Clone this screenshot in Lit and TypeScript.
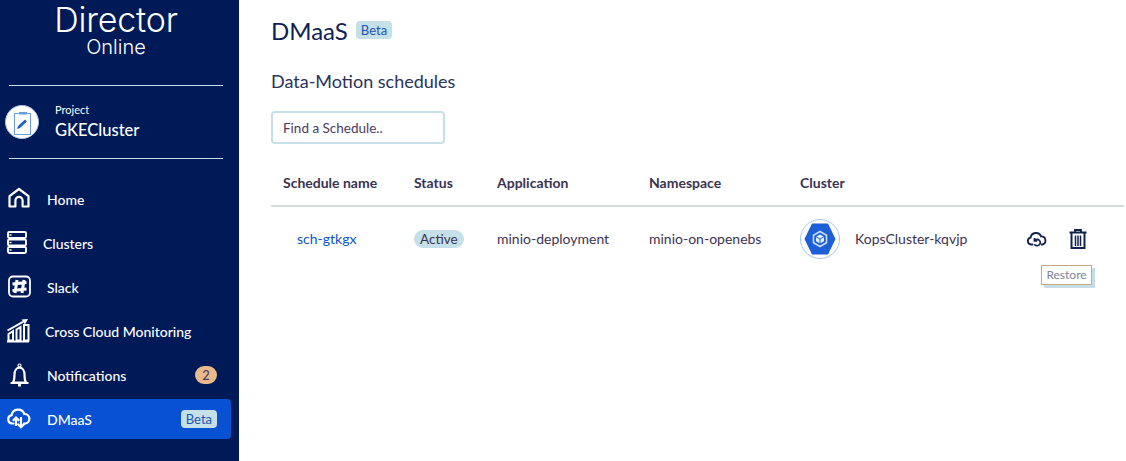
import { LitElement, html, css, svg } from 'lit';
import { customElement } from 'lit/decorators.js';

const navIcons: Record<string, unknown> = {
  home: svg`<path d="M2.500 19.500V9.200L12 2l9.500 7.200v10.300h-5.900v-6a3.600 3.600 0 0 0-7.200 0v6z" fill="none" stroke="#fff" stroke-width="2.200" stroke-linejoin="round"/>`,
  clusters: svg`<rect x="1" y="1" width="18" height="6" rx="1.200" fill="none" stroke="#fff" stroke-width="1.900"/><rect x="1" y="8.500" width="18" height="6" rx="1.200" fill="none" stroke="#fff" stroke-width="1.900"/><rect x="1" y="16" width="18" height="6" rx="1.200" fill="none" stroke="#fff" stroke-width="1.900"/><path d="M2.500 4h2M2.500 11.500h2M2.500 19h2" stroke="#fff" stroke-width="1.500"/>`,
  slack: svg`<rect x="2" y="1.500" width="21" height="20" rx="4" fill="none" stroke="#fff" stroke-width="1.800"/><path d="M10 5 8 18M17 5l-2 13M5.500 9l14-1.500M5.500 15.500l14-1.500" stroke="#fff" stroke-width="3"/>`,
  monitoring: svg`<path d="M0 22.500h22" stroke="#fff" stroke-width="2"/><path d="M1.500 21.500v-6.500l4.500-3v9.500zM9.500 21.500V10.500l4-2.500v13.500zM17 21.500V6h4.500v15.500z" fill="none" stroke="#fff" stroke-width="2"/><path d="M.5 11.500 16 2.800" stroke="#fff" stroke-width="2"/><path d="m14.500 .5 6.500-.5-3 5.500z" fill="#fff"/>`,
  bell: svg`<path d="M6 19.500c1.200-2 1.500-4.200 1.500-8 0-4 2.200-6.800 5-6.800s5 2.800 5 6.800c0 3.800.3 6 1.500 8z" fill="none" stroke="#fff" stroke-width="2.200" stroke-linejoin="round"/><path d="M3.500 20h18" stroke="#fff" stroke-width="2"/><circle cx="12.500" cy="2.500" r="1.500" fill="none" stroke="#fff" stroke-width="1.200"/><path d="M11 21h3v2.500h-3z" fill="#fff"/>`,
  cloud: svg`<path d="M6.500 16.500H5.200a4.200 4.200 0 0 1-.6-8.300 6.600 6.600 0 0 1 12.700-1.200 4.800 4.800 0 0 1 1.200 9.500h-1.500" fill="none" stroke="#fff" stroke-width="2.200" stroke-linecap="round"/><path d="M9 19v-7.500M5.800 13.800 9 10.600l3.200 3.200M14 10v10M10.500 16.800l3.500 3.500 3.500-3.500" fill="none" stroke="#fff" stroke-width="2.200"/>`,
};

@customElement('app-root')
export class AppRoot extends LitElement {
  static styles = css`
    :host {
      display: block;
      width: 1126px;
      height: 461px;
      overflow: hidden;
      background: #fff;
      font-family: Lato, "Liberation Sans", sans-serif;
      color: #2b2b4b;
    }
    .page { display: flex; height: 461px; }
    .side {
      width: 239px;
      flex: none;
      background: #001a57;
      color: #fff;
      overflow: hidden;
    }
    .logo {
      height: 85px;
      width: 214px;
      margin-left: 9px;
      border-bottom: 1px solid #c5dfe8;
      display: flex;
      flex-direction: column;
      align-items: center;
      font-family: Inter, sans-serif;
      font-weight: 300;
    }
    .logo-main { font-size: 34px; line-height: 36px; margin-top: 2px; letter-spacing: -0.2px; }
    .logo-sub { font-size: 20px; line-height: 18px; }
    .project {
      height: 73px;
      box-sizing: border-box;
      padding: 0 0 3px 5px;
      display: flex;
      align-items: center;
      gap: 16px;
      position: relative;
    }
    .project::after {
      content: '';
      position: absolute;
      left: 9px;
      bottom: 0;
      width: 214px;
      height: 1px;
      background: #c5dfe8;
    }
    .avatar { width: 34px; height: 34px; flex: none; display: block; margin-top: 2px; }
    .project-label { font-size: 11px; line-height: 13px; margin-bottom: 5px; }
    .project-name { font-size: 16.500px; line-height: 19px; font-weight: 500; }
    .nav { padding-top: 18px; display: flex; flex-direction: column; }
    .item {
      height: 44px;
      width: 231px;
      display: flex;
      align-items: center;
      box-sizing: border-box;
      padding: 0 14px 0 7px;
      font-size: 14px;
      font-weight: 500;
    }
    .item.active {
      height: 40px;
      margin: 2px 0;
      background: #0851d2;
      border-radius: 0 4px 4px 0;
    }
    .item svg { width: 24px; height: 24px; flex: none; display: block; }
    .item-label { margin-left: 16px; flex: 1; white-space: nowrap; }
    .item-label.tight { margin-left: 12px; }
    .item-label.mid { margin-left: 14px; }
    .badge-count {
      width: 22px;
      height: 18px;
      border-radius: 9px;
      background: #e9b98c;
      color: #4f3a6a;
      font-size: 13px;
      text-align: center;
      line-height: 18px;
    }
    .tag {
      display: inline-block;
      background: #c5e0e8;
      color: #1d55b4;
      border-radius: 4px;
      font-size: 13px;
      line-height: 18px;
      padding: 0 5px;
      font-weight: 400;
    }
    .main { flex: 1; padding: 0 2px 0 32px; min-width: 0; }
    .title-row { display: flex; align-items: center; gap: 8px; height: 60px; }
    h1 { margin: 0; font-size: 24px; font-weight: 400; color: #0e2257; }
    h2 { margin: 0; font-size: 18px; font-weight: 400; color: #2a3358; line-height: 24px; margin-top: 9px; }
    .search {
      display: block;
      box-sizing: border-box;
      width: 174px;
      height: 33px;
      margin-top: 18px;
      padding: 0 10px;
      border: 2px solid #c5e0e8;
      border-radius: 4px;
      font: 13.500px Lato, sans-serif;
      color: #4c3a5c;
      outline: none;
    }
    .search::placeholder { color: #4c3a5c; opacity: 1; }
    .grid {
      display: grid;
      grid-template-columns: 143px 83px 152px 151px 224px 1fr;
    }
    .th {
      height: 63px;
      display: flex;
      align-items: center;
      font-size: 14px;
      font-weight: 700;
      color: #3a3350;
      border-bottom: 2px solid #d3dfdc;
      padding-top: 16px;
      box-sizing: border-box;
    }
    .th:first-child { padding-left: 12px; }
    .td {
      height: 63px;
      display: flex;
      align-items: center;
      font-size: 14px;
      color: #3d3350;
    }
    .td.name { padding-left: 26px; color: #0d55c8; }
    .pill {
      background: #c5e0e8;
      border-radius: 9px;
      font-size: 13.500px;
      line-height: 18px;
      padding: 0 6px;
    }
    .cluster { gap: 15px; }
    .cluster svg { width: 40px; height: 40px; flex: none; margin-top: 1px; }
    .actions { position: relative; gap: 18px; padding-left: 2px; }
    .restore { width: 22px; height: 22px; flex: none; display: block; }
    .trash { width: 24px; height: 24px; flex: none; display: block; }
    .tip {
      position: absolute;
      left: 17px;
      top: 58px;
      box-sizing: border-box;
      width: 51px;
      height: 20px;
      background: #fff;
      border: 1px solid #c4a888;
      box-shadow: 3px 3px 0 #c5dde5;
      color: #7d8595;
      font-size: 12px;
      line-height: 18px;
      text-align: center;
    }
  `;

  private item(icon: string, label: string, extra: unknown = '', cls = '', labelCls = '') {
    return html`
      <div class="item ${cls}">
        <svg viewBox="0 0 24 24">${navIcons[icon]}</svg>
        <span class="item-label ${labelCls}">${label}</span>
        ${extra}
      </div>
    `;
  }

  render() {
    return html`
      <div class="page">
        <aside class="side">
          <div class="logo">
            <div class="logo-main">Director</div>
            <div class="logo-sub">Online</div>
          </div>
          <div class="project">
            <svg class="avatar" viewBox="0 0 34 34">
              <circle cx="17" cy="17" r="16.500" fill="#fff" stroke="#a9c6e6"/>
              <rect x="9.500" y="8.500" width="16" height="21" fill="#fff" stroke="#6f9bd8"/>
              <rect x="14" y="7" width="8" height="2.500" fill="#6f9bd8"/>
              <path d="m12 24 1-3 7-6.500 2 2-7 6.500z" fill="#1f62c8"/>
            </svg>
            <div>
              <div class="project-label">Project</div>
              <div class="project-name">GKECluster</div>
            </div>
          </div>
          <nav class="nav">
            ${this.item('home', 'Home')}
            ${this.item('clusters', 'Clusters', '', '', 'tight')}
            ${this.item('slack', 'Slack')}
            ${this.item('monitoring', 'Cross Cloud Monitoring', '', '', 'mid')}
            ${this.item('bell', 'Notifications', html`<span class="badge-count">2</span>`)}
            ${this.item('cloud', 'DMaaS', html`<span class="tag">Beta</span>`, 'active')}
          </nav>
        </aside>
        <main class="main">
          <div class="title-row"><h1>DMaaS</h1><span class="tag">Beta</span></div>
          <h2>Data-Motion schedules</h2>
          <input class="search" placeholder="Find a Schedule.." />
          <div class="grid">
            <div class="th">Schedule name</div>
            <div class="th">Status</div>
            <div class="th">Application</div>
            <div class="th">Namespace</div>
            <div class="th">Cluster</div>
            <div class="th"></div>
            <div class="td name">sch-gtkgx</div>
            <div class="td"><span class="pill">Active</span></div>
            <div class="td">minio-deployment</div>
            <div class="td">minio-on-openebs</div>
            <div class="td cluster">
              <svg viewBox="0 0 40 40">
                <circle cx="20" cy="20" r="19.500" fill="#fff" stroke="#a9c6e6"/>
                <path d="M12 4.500h16L35.500 20 28 35.500H12L4.500 20z" fill="#1d5fd6"/>
                <path d="m20 12.500 6.500 3.800v7.400L20 27.500l-6.500-3.800v-7.400z" fill="none" stroke="#c5dff0" stroke-width="1.600"/>
                <path d="m20 15.500 4 2.200v4.600L20 24.500l-4-2.200v-4.600z" fill="#e6f0fb"/>
                <path d="M16 17.700 20 20l4-2.300M20 20v4.500" fill="none" stroke="#1d5fd6" stroke-width="1"/>
              </svg>
              KopsCluster-kqvjp
            </div>
            <div class="td actions">
              <svg class="restore" viewBox="0 0 24 24">
                <path d="M7 18H5.500a3.800 3.800 0 0 1-.5-7.500 6 6 0 0 1 11.500-1.300 4.500 4.500 0 0 1 1.500 8.800h-1" fill="none" stroke="#12224f" stroke-width="2" stroke-linecap="round"/>
                <path d="M9 17.500a3.500 3.500 0 1 0 .5-4M9.200 11v3h3" fill="none" stroke="#12224f" stroke-width="1.800"/>
              </svg>
              <svg class="trash" viewBox="0 0 24 24">
                <path d="M3.500 5.500h17M9 5V3h6v2" fill="none" stroke="#12224f" stroke-width="1.800"/>
                <path d="M5.500 6v15h13V6" fill="none" stroke="#12224f" stroke-width="2"/>
                <path d="M9.500 8.500V19M12 8.500V19M14.500 8.500V19" stroke="#12224f" stroke-width="1.500"/>
              </svg>
              <div class="tip">Restore</div>
            </div>
          </div>
        </main>
      </div>
    `;
  }
}
